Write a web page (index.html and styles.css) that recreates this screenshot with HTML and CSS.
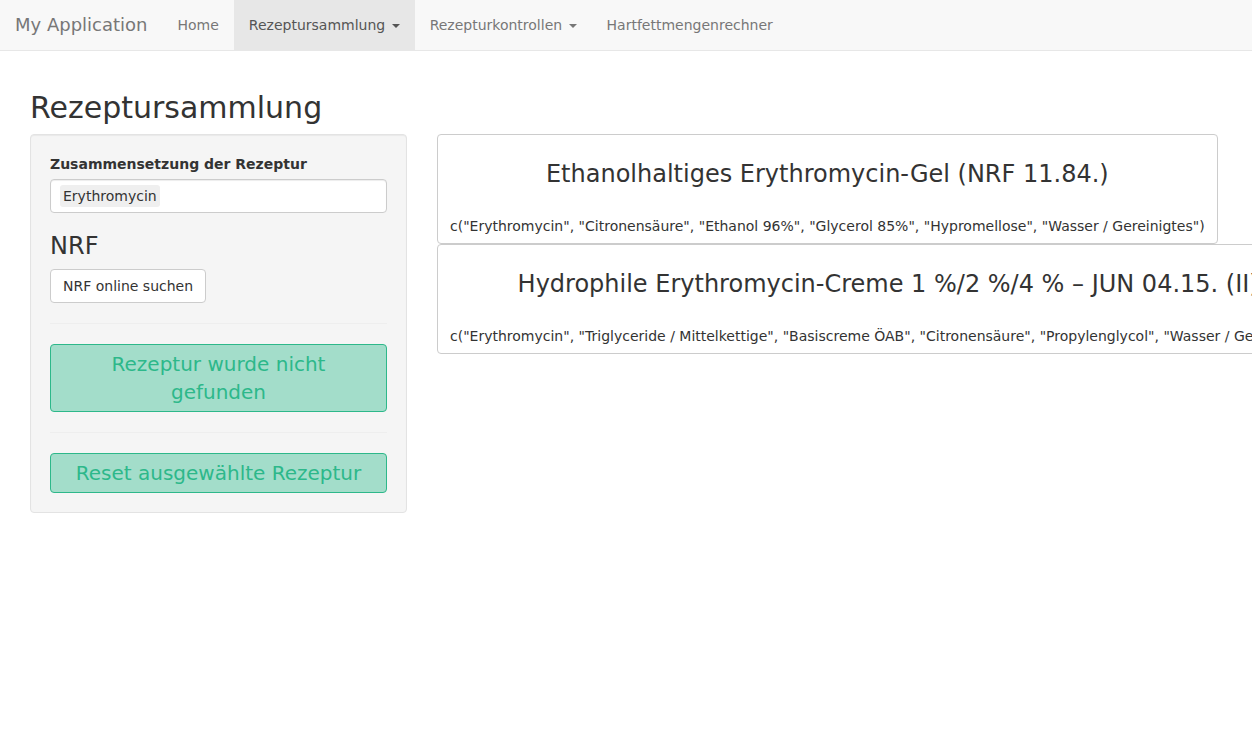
FILE: index.html
```html
<!DOCTYPE html>
<html lang="de">
<head>
<meta charset="utf-8">
<title>My Application</title>
<link rel="stylesheet" href="styles.css">
</head>
<body>
<nav class="navbar">
  <span class="brand">My Application</span>
  <ul class="nav">
    <li><a>Home</a></li>
    <li class="active"><a>Rezeptursammlung <span class="caret"></span></a></li>
    <li><a>Rezepturkontrollen <span class="caret"></span></a></li>
    <li><a>Hartfettmengenrechner</a></li>
  </ul>
</nav>
<div class="page">
  <h2 class="title">Rezeptursammlung</h2>
  <div class="row">
    <div class="side">
      <div class="well">
        <label class="label">Zusammensetzung der Rezeptur</label>
        <div class="select"><span class="item">Erythromycin</span></div>
        <h3 class="nrf">NRF</h3>
        <button class="btn">NRF online suchen</button>
        <hr class="sep">
        <button class="btn-big">Rezeptur wurde nicht gefunden</button>
        <hr class="sep">
        <button class="btn-big">Reset ausgewählte Rezeptur</button>
      </div>
    </div>
    <div class="main">
      <div class="card">
        <h3 class="card-title">Ethanolhaltiges Erythromycin-Gel (NRF 11.84.)</h3>
        <p class="card-text">c("Erythromycin", "Citronensäure", "Ethanol 96%", "Glycerol 85%", "Hypromellose", "Wasser / Gereinigtes")</p>
      </div>
      <div class="card">
        <h3 class="card-title">Hydrophile Erythromycin-Creme 1 %/2 %/4 % – JUN 04.15. (II)</h3>
        <p class="card-text">c("Erythromycin", "Triglyceride / Mittelkettige", "Basiscreme ÖAB", "Citronensäure", "Propylenglycol", "Wasser / Gereinigtes")</p>
      </div>
    </div>
  </div>
</div>
</body>
</html>
```
FILE: styles.css
```css
* { box-sizing: border-box; }
html, body { margin: 0; padding: 0; }
body {
  font-family: "DejaVu Sans", sans-serif;
  font-size: 14px;
  line-height: 20px;
  color: #333;
  background: #fff;
  overflow: hidden;
  width: 1252px;
  height: 744px;
}
.navbar {
  display: flex;
  height: 51px;
  background: #f8f8f8;
  border-bottom: 1px solid #e7e7e7;
}
.brand {
  display: block;
  padding: 15px 15px;
  font-size: 18px;
  line-height: 20px;
  height: 50px;
  color: #777;
}
.nav {
  display: flex;
  list-style: none;
  margin: 0;
  padding: 0;
}
.nav li a {
  display: block;
  padding: 15px 15px;
  line-height: 20px;
  color: #777;
  height: 50px;
}
.nav li.active a {
  background: #e7e7e7;
  color: #555;
}
.caret {
  display: inline-block;
  width: 0;
  height: 0;
  margin-left: 2px;
  vertical-align: middle;
  border-top: 4px solid;
  border-left: 4px solid transparent;
  border-right: 4px solid transparent;
}
.page {
  padding: 0 30px;
}
.title {
  font-size: 30px;
  font-weight: 500;
  line-height: 33px;
  margin: 40px 0 10px 0;
}
.row {
  display: flex;
  gap: 30px;
  align-items: flex-start;
}
.side {
  width: 377px;
  flex: none;
}
.main {
  flex: 1;
  min-width: 0;
}
.well {
  background: #f5f5f5;
  border: 1px solid #e3e3e3;
  border-radius: 4px;
  padding: 19px;
  box-shadow: inset 0 1px 1px rgba(0,0,0,.05);
}
.label {
  display: block;
  font-weight: bold;
  margin-bottom: 5px;
}
.select {
  height: 34px;
  background: #fff;
  border: 1px solid #ccc;
  border-radius: 4px;
  padding: 5px 9px 2px;
  box-shadow: inset 0 1px 1px rgba(0,0,0,.075);
}
.item {
  display: inline-block;
  padding: 1px 3px;
  background: #efefef;
  border-radius: 3px;
  line-height: 20px;
}
.nrf {
  font-size: 24px;
  font-weight: 500;
  line-height: 26.4px;
  margin: 20px 0 10px;
}
.btn {
  display: inline-block;
  font-family: inherit;
  font-size: 14px;
  line-height: 20px;
  padding: 6px 12px;
  color: #333;
  background: #fff;
  border: 1px solid #ccc;
  border-radius: 4px;
}
.sep {
  margin: 20px 0;
  border: 0;
  border-top: 1px solid #eee;
}
.btn-big {
  display: block;
  width: 100%;
  font-family: inherit;
  font-size: 20px;
  line-height: 28px;
  padding: 5px 16px;
  color: #2db88a;
  background: #a3ddca;
  border: 1px solid #2db88a;
  border-radius: 4px;
  text-align: center;
}
.card {
  width: max-content;
  height: 110px;
  border: 1px solid #ccc;
  border-radius: 4px;
  padding: 0 12px;
  background: #fff;
  white-space: nowrap;
}
.card-title {
  font-size: 24px;
  font-weight: 500;
  line-height: 26.4px;
  margin: 26px 0 0;
  text-align: center;
}
.card-text {
  margin: 29px 0 0;
  line-height: 20px;
}
```
